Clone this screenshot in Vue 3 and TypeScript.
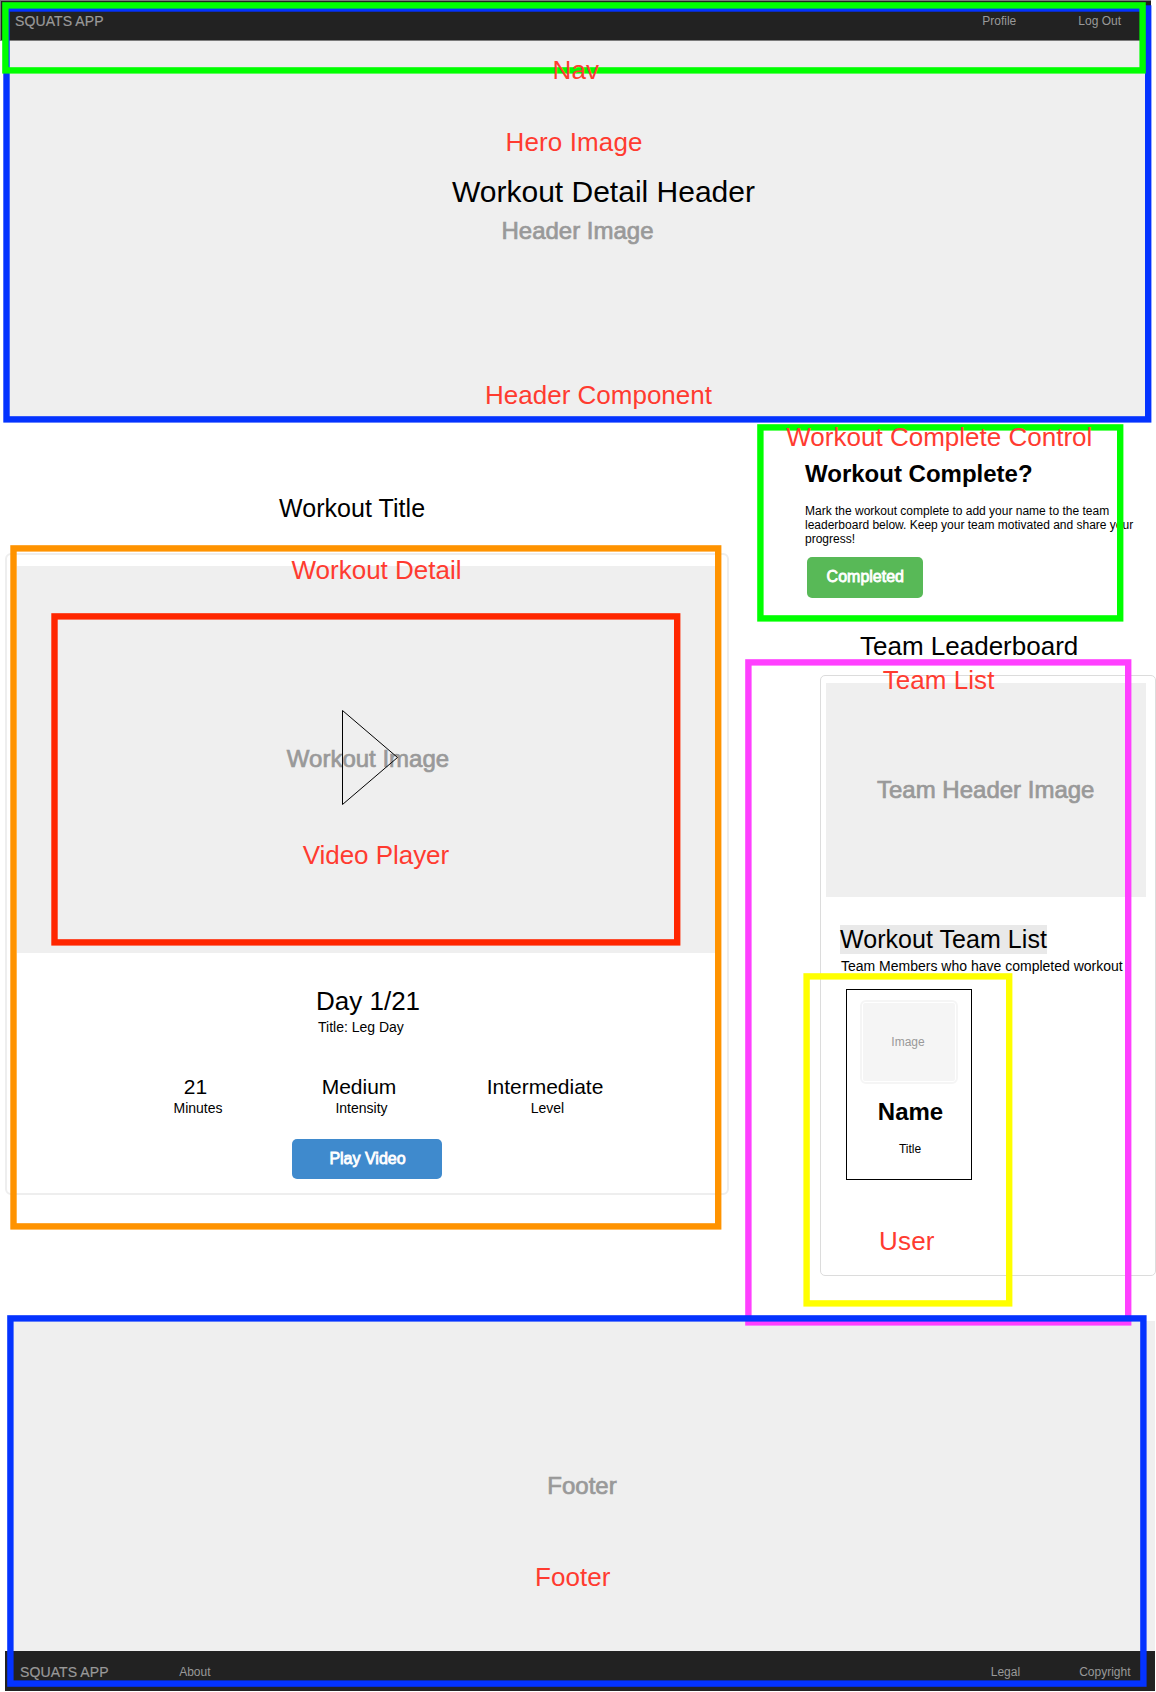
<script setup lang="ts">
interface Frame {
  name: string
  color: string
  left: number
  top: number
  right: number
  bottom: number
}

interface Label {
  text: string
  x: number
  y: number
  width: number
}

interface Stat {
  value: string
  label: string
  size: string
}

const stroke = 6.4

const frames: Frame[] = [
  { name: 'header', color: '#0433ff', left: 3.3, top: 5.3, right: 1151.4, bottom: 422.6 },
  { name: 'nav', color: '#00ff00', left: 2.2, top: 2.2, right: 1145.8, bottom: 73.6 },
  { name: 'control', color: '#00ff00', left: 757.2, top: 424.2, right: 1123.4, bottom: 621.6 },
  { name: 'team', color: '#ff40ff', left: 745.2, top: 659.2, right: 1131.4, bottom: 1325.6 },
  { name: 'user', color: '#ffff00', left: 803.4, top: 973.2, right: 1012.4, bottom: 1306.6 },
  { name: 'detail', color: '#ff9300', left: 10.3, top: 545.2, right: 721.4, bottom: 1229.6 },
  { name: 'video', color: '#ff2600', left: 51.3, top: 613.2, right: 680.4, bottom: 945.6 },
  { name: 'footer', color: '#0433ff', left: 7.2, top: 1315.2, right: 1146.6, bottom: 1686.8 },
]

const labels: Label[] = [
  { text: 'Nav', x: 552.5, y: 78.7, width: 46.5 },
  { text: 'Hero Image', x: 505.5, y: 151, width: 137 },
  { text: 'Header Component', x: 485, y: 404, width: 227 },
  { text: 'Workout Complete Control', x: 786.3, y: 446, width: 306 },
  { text: 'Workout Detail', x: 291.5, y: 579, width: 170 },
  { text: 'Video Player', x: 302.7, y: 863.7, width: 146.5 },
  { text: 'Team List', x: 882.7, y: 689.3, width: 111.7 },
  { text: 'User', x: 879, y: 1250, width: 55.5 },
  { text: 'Footer', x: 535, y: 1586, width: 75.5 },
]

const stats: Stat[] = [
  { value: '21', label: 'Minutes', size: 'narrow' },
  { value: 'Medium', label: 'Intensity', size: 'middle' },
  { value: 'Intermediate', label: 'Level', size: 'wide' },
]
</script>

<template>
  <div class="page">
    <nav class="nav">
      <span class="brand">SQUATS APP</span>
      <div class="links">
        <span>Profile</span>
        <span>Log Out</span>
      </div>
    </nav>

    <header class="hero">
      <h1>Workout Detail Header</h1>
      <p class="placeholder">Header Image</p>
    </header>

    <main class="main">
      <section class="workout">
        <h2 class="workout-title">Workout Title</h2>
        <div class="workout-card">
          <div class="workout-image">
            <span class="placeholder">Workout Image</span>
            <svg class="play" width="58" height="97" viewBox="0 0 58 97">
              <path d="M1.5 1.5 L56.5 48.5 L1.5 95.5 Z" fill="none" stroke="#000" stroke-width="1" />
            </svg>
          </div>
          <h3 class="day">Day 1/21</h3>
          <p class="day-title">Title: Leg Day</p>
          <div class="stats">
            <div v-for="s in stats" :key="s.label" class="stat" :class="s.size">
              <div class="value">{{ s.value }}</div>
              <div class="caption">{{ s.label }}</div>
            </div>
          </div>
          <button class="btn play-btn">Play Video</button>
        </div>
      </section>

      <aside class="side">
        <div class="control">
          <h2>Workout Complete?</h2>
          <p>
            Mark the workout complete to add your name to the team<br />
            leaderboard below. Keep your team motivated and share your<br />
            progress!
          </p>
          <button class="btn done-btn">Completed</button>
        </div>
        <h2 class="board-title">Team Leaderboard</h2>
        <div class="team-card">
          <div class="team-image"><span class="placeholder">Team Header Image</span></div>
          <h3 class="team-title">Workout Team List</h3>
          <p class="team-text">Team Members who have completed workout</p>
          <div class="user">
            <div class="avatar"><div class="avatar-fill">Image</div></div>
            <h4>Name</h4>
            <p>Title</p>
          </div>
        </div>
      </aside>
    </main>

    <footer class="footer">
      <div class="footer-body"><span class="placeholder">Footer</span></div>
      <div class="footer-bar">
        <span class="brand">SQUATS APP</span>
        <span class="about">About</span>
        <div class="footer-links">
          <span>Legal</span>
          <span>Copyright</span>
        </div>
      </div>
    </footer>

    <svg class="notes" width="1156" height="1692" viewBox="0 0 1156 1692">
      <rect
        v-for="f in frames"
        :key="f.name"
        :x="f.left + stroke / 2"
        :y="f.top + stroke / 2"
        :width="f.right - f.left - stroke"
        :height="f.bottom - f.top - stroke"
        :stroke="f.color"
        :stroke-width="stroke"
        fill="none"
      />
      <text v-for="l in labels" :key="l.text + l.y" :x="l.x" :y="l.y" :textLength="l.width">{{ l.text }}</text>
    </svg>
  </div>
</template>

<style>
body {
  margin: 0;
  background: #fff;
}
</style>

<style scoped>
.page {
  position: relative;
  width: 1156px;
  height: 1692px;
  overflow: hidden;
  font-family: 'Liberation Sans', Arial, sans-serif;
  color: #000;
}
h1, h2, h3, h4, p {
  margin: 0;
  font-weight: 400;
  white-space: nowrap;
}
.placeholder {
  font-size: 24px;
  line-height: 28px;
  color: #999;
  -webkit-text-stroke: 0.7px #999;
}
.brand {
  font-size: 14px;
  line-height: 16px;
  letter-spacing: 0.1px;
  -webkit-text-stroke: 0.2px #999;
}
.nav {
  box-sizing: border-box;
  width: 1151px;
  height: 41px;
  padding: 12px 30px 0 14px;
  display: flex;
  justify-content: space-between;
  background: #222;
  border: 1px solid #7b7b7b;
  border-right: 0;
  color: #999;
}
.nav .links {
  display: flex;
  gap: 62px;
  padding-top: 1px;
  font-size: 12px;
  line-height: 14px;
}
.hero {
  box-sizing: border-box;
  width: 1137px;
  height: 378px;
  margin-left: 9px;
  padding-top: 134px;
  background: #efefef;
  text-align: center;
}
.hero h1 {
  padding-left: 52px;
  font-size: 30px;
  line-height: 34px;
}
.hero .placeholder {
  margin-top: 8px;
}
.main {
  display: flex;
  height: 901.7px;
}
.workout {
  width: 745px;
}
.workout-title {
  margin: 74.5px 0 0 279px;
  font-size: 25px;
  line-height: 29px;
  letter-spacing: 0.06px;
}
.workout-card {
  box-sizing: border-box;
  width: 724px;
  height: 642px;
  margin: 30.5px 0 0 5px;
  padding: 10.7px 10px 0;
  border: 2px solid #eee;
  border-radius: 6px;
}
.workout-image {
  position: relative;
  height: 387px;
  display: flex;
  align-items: center;
  justify-content: center;
  background: #efefef;
}
.workout-image .placeholder {
  padding-left: 2px;
}
.play {
  position: absolute;
  left: 324px;
  top: 143.3px;
}
.day {
  margin: 33.3px 0 0 299px;
  font-size: 26px;
  line-height: 30px;
}
.day-title {
  margin: 3px 0 0 301px;
  font-size: 14px;
  line-height: 16px;
}
.stats {
  display: flex;
  margin: 40px 0 0 128.5px;
  text-align: center;
}
.narrow {
  width: 100px;
  margin-right: 63.5px;
}
.middle {
  width: 100px;
  margin-right: 76px;
}
.wide {
  width: 120px;
}
.value {
  font-size: 21px;
  line-height: 24px;
}
.caption {
  margin-top: 1px;
  padding-left: 5px;
  font-size: 14px;
  line-height: 16px;
}
.btn {
  display: block;
  padding: 0;
  border: 0;
  border-radius: 5px;
  font: 16px/18px 'Liberation Sans', Arial, sans-serif;
  color: #fff;
  -webkit-text-stroke: 0.8px #fff;
}
.play-btn {
  width: 150px;
  height: 40px;
  margin: 23px 0 0 275px;
  padding-left: 1px;
  background: #3f8acd;
}
.side {
  width: 411px;
}
.control {
  padding: 41px 0 0 60px;
}
.control h2 {
  font-size: 24px;
  line-height: 28px;
  font-weight: 700;
}
.control p {
  margin-top: 16px;
  font-size: 12px;
  line-height: 14px;
}
.done-btn {
  width: 116px;
  height: 41px;
  margin: 10.5px 0 0 2.3px;
  background: #58b957;
}
.board-title {
  margin: 33.5px 0 0 115px;
  font-size: 26px;
  line-height: 30px;
}
.team-card {
  box-sizing: border-box;
  width: 336px;
  height: 601px;
  margin: 14px 0 0 75px;
  padding: 7px 0 0 5px;
  border: 1px solid #dcdcdc;
  border-radius: 5px;
}
.team-image {
  width: 319.5px;
  height: 213.5px;
  display: flex;
  align-items: center;
  justify-content: center;
  background: #efefef;
}
.team-title {
  width: max-content;
  margin: 28.5px 0 0 14px;
  background: #e9e9e9;
  font-size: 25px;
  line-height: 29px;
  letter-spacing: 0.05px;
}
.team-text {
  margin: 4px 0 0 15px;
  font-size: 14px;
  line-height: 16px;
}
.user {
  box-sizing: border-box;
  width: 126px;
  height: 191px;
  margin: 15px 0 0 20px;
  padding-top: 10px;
  border: 1px solid #000;
  text-align: center;
}
.avatar {
  box-sizing: border-box;
  width: 98px;
  height: 84px;
  margin-left: 13px;
  padding: 1px;
  border: 2px solid #f5f5f5;
  border-radius: 6px;
}
.avatar-fill {
  height: 78px;
  padding-right: 2px;
  background: #f5f5f5;
  color: #999;
  font-size: 12px;
  line-height: 78px;
  border-radius: 2px;
}
.user h4 {
  margin-top: 13.5px;
  padding-left: 3px;
  font-size: 24px;
  line-height: 28px;
  font-weight: 700;
}
.user p {
  margin-top: 16.5px;
  padding-left: 2px;
  font-size: 12px;
  line-height: 14px;
}
.footer {
  width: 1147px;
  margin-left: 8px;
}
.footer-body {
  box-sizing: border-box;
  height: 330.3px;
  padding: 151px 0 0 539.3px;
  background: #efefef;
}
.footer-bar {
  box-sizing: border-box;
  width: 1150px;
  height: 40px;
  margin-left: -3px;
  padding: 13px 24.5px 0 15px;
  display: flex;
  background: #222;
  color: #999;
  font-size: 12px;
  line-height: 14px;
}
.about {
  margin: 1px 0 0 70.5px;
}
.footer-links {
  display: flex;
  gap: 59px;
  margin: 1px 0 0 auto;
}
.notes {
  position: absolute;
  left: 0;
  top: 0;
}
.notes text {
  font-size: 26px;
  fill: #ff3b30;
}
</style>
